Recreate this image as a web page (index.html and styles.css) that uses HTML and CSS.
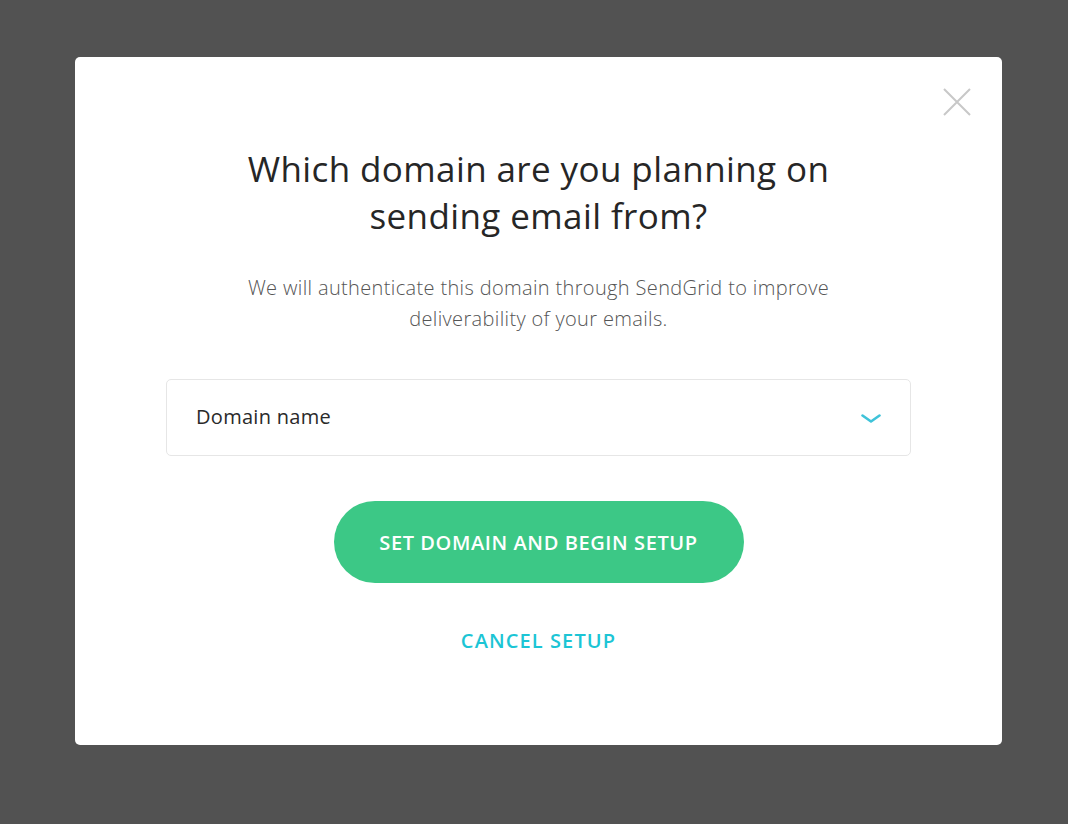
FILE: index.html
```html
<!DOCTYPE html>
<html lang="en">
<head>
<meta charset="utf-8">
<title>Domain setup</title>
<link rel="stylesheet" href="styles.css">
</head>
<body>
<div class="backdrop">
  <div class="modal">
    <button class="close" aria-label="Close">
      <svg width="28" height="28" viewBox="0 0 28 28"><path d="M1 1L27 27M27 1L1 27" stroke="#c8c8c8" stroke-width="2" fill="none"/></svg>
    </button>
    <h1 class="title">Which domain are you planning on<br>sending email from?</h1>
    <p class="subtitle">We will authenticate this domain through SendGrid to improve<br>deliverability of your emails.</p>
    <div class="select">
      <span class="select-label">Domain name</span>
      <svg class="chevron" width="20" height="10" viewBox="0 0 20 10"><path d="M1.5 1.5L10 7.5L18.5 1.5" stroke="#3fc3d9" stroke-width="2.6" fill="none" stroke-linecap="round" stroke-linejoin="round"/></svg>
    </div>
    <button class="primary">SET DOMAIN AND BEGIN SETUP</button>
    <button class="link">CANCEL SETUP</button>
  </div>
</div>
</body>
</html>
```
FILE: styles.css
```css
* { box-sizing: border-box; }
html, body { margin: 0; padding: 0; }
body {
  width: 1068px;
  height: 824px;
  background: #525252;
  font-family: "Open Sans", Lato, sans-serif;
  overflow: hidden;
}
.backdrop {
  padding: 57px 66px 0 75px;
}
.modal {
  position: relative;
  width: 927px;
  height: 688px;
  background: #fff;
  border-radius: 5px;
  display: flex;
  flex-direction: column;
  align-items: center;
  padding: 88px 91px 0;
}
.close {
  position: absolute;
  top: 31px;
  right: 31px;
  width: 28px;
  height: 28px;
  padding: 0;
  border: none;
  background: none;
  display: block;
}
.close svg { display: block; }
.title {
  margin: 0;
  font-size: 35px;
  line-height: 47px;
  font-weight: 400;
  color: #262626;
  text-align: center;
  letter-spacing: 0.4px;
}
.subtitle {
  margin: 33px 0 0;
  font-size: 20px;
  line-height: 31px;
  font-weight: 300;
  color: #555;
  text-align: center;
  letter-spacing: 0.35px;
}
.select {
  margin-top: 45px;
  width: 745px;
  height: 77px;
  border: 1px solid #e6e6e6;
  border-radius: 5px;
  display: flex;
  align-items: center;
  justify-content: space-between;
  padding: 0 29px 0 29px;
}
.select-label {
  font-size: 20px;
  color: #2a2a2a;
  letter-spacing: 0.3px;
  margin-top: -3px;
}
.chevron { display: block; margin-top: 2px; }
.primary {
  margin-top: 45px;
  width: 410px;
  height: 82px;
  border: none;
  border-radius: 41px;
  background: #3cc886;
  color: #fff;
  font-family: inherit;
  font-size: 20px;
  font-weight: 600;
  letter-spacing: 0.6px;
}
.link {
  margin-top: 34px;
  border: none;
  background: none;
  padding: 0;
  font-family: inherit;
  font-size: 20px;
  font-weight: 600;
  color: #1cc5d5;
  letter-spacing: 1.1px;
  line-height: 48px;
}
```
